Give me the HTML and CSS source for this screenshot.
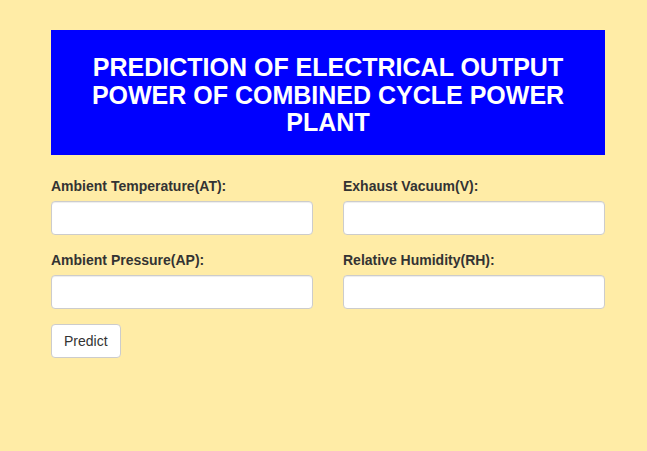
FILE: index.html
```html
<!DOCTYPE html>
<html>
<head>
<meta charset="utf-8">
<link rel="stylesheet" href="styles.css">
</head>
<body>
<div class="page">
  <div class="banner">
    <h3 class="title">PREDICTION OF ELECTRICAL OUTPUT POWER OF COMBINED CYCLE POWER PLANT</h3>
  </div>
  <form class="form">
    <div class="grid">
      <div class="group">
        <label class="label">Ambient Temperature(AT):</label>
        <input class="input" type="text">
      </div>
      <div class="group">
        <label class="label">Exhaust Vacuum(V):</label>
        <input class="input" type="text">
      </div>
      <div class="group">
        <label class="label">Ambient Pressure(AP):</label>
        <input class="input" type="text">
      </div>
      <div class="group">
        <label class="label">Relative Humidity(RH):</label>
        <input class="input" type="text">
      </div>
    </div>
    <button class="btn" type="button">Predict</button>
  </form>
</div>
</body>
</html>
```

FILE: styles.css
```css
html, body {
  margin: 0;
  padding: 0;
  background: #ffeca6;
  font-family: "Liberation Sans", Arial, sans-serif;
  font-size: 14px;
  line-height: 20px;
  color: #333;
}
.page {
  width: 554px;
  margin-left: 51px;
  padding-top: 30px;
}
.banner {
  background: #0000ff;
  height: 125px;
  display: flex;
  align-items: center;
  justify-content: center;
  padding: 6px 30px 0;
  box-sizing: border-box;
}
.title {
  margin: 0;
  color: #fff;
  font-size: 25px;
  line-height: 27.5px;
  font-weight: bold;
  text-align: center;
}
.form {
  margin-top: 21px;
}
.grid {
  display: grid;
  grid-template-columns: 262px 262px;
  column-gap: 30px;
}
.group {
  margin-bottom: 15px;
}
.label {
  display: block;
  font-weight: bold;
  margin-bottom: 5px;
}
.input {
  display: block;
  width: 100%;
  height: 34px;
  box-sizing: border-box;
  padding: 6px 12px;
  font-size: 14px;
  border: 1px solid #ccc;
  border-radius: 4px;
  background: #fff;
  box-shadow: inset 0 1px 1px rgba(0,0,0,0.075);
  margin: 0;
}
.btn {
  display: block;
  height: 34px;
  padding: 6px 12px;
  font-family: "Liberation Sans", Arial, sans-serif;
  font-size: 14px;
  line-height: 20px;
  color: #333;
  background: #fff;
  border: 1px solid #ccc;
  border-radius: 4px;
  margin: 0;
}
```
